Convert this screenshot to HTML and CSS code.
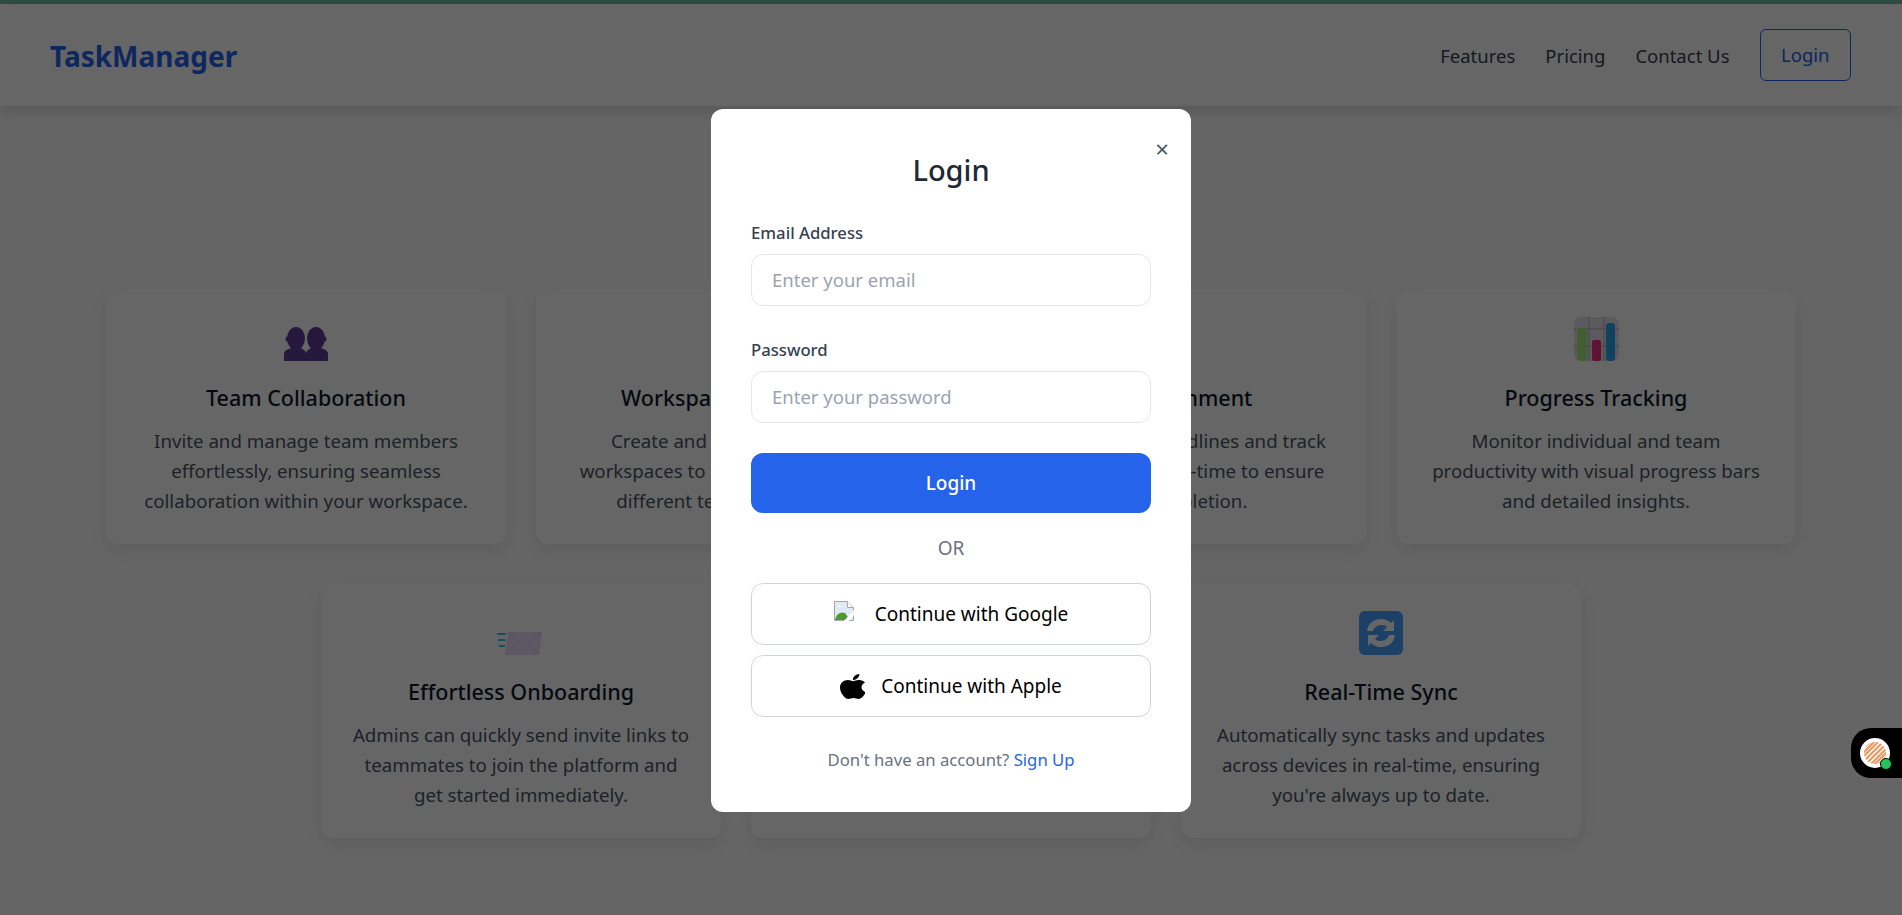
FILE: index.html
```html
<!DOCTYPE html>
<html lang="en">
<head>
<meta charset="UTF-8">
<meta name="viewport" content="width=device-width, initial-scale=1.0">
<title>TaskManager</title>
<link rel="stylesheet" href="styles.css">
</head>
<body>

<div class="top-strip"></div>

<header class="navbar">
    <a class="logo" href="#">TaskManager</a>
    <nav class="nav-links">
        <a href="#">Features</a>
        <a href="#">Pricing</a>
        <a href="#">Contact Us</a>
        <a class="nav-login" href="#">Login</a>
    </nav>
</header>

<section class="features">
    <div class="feature-row">
        <div class="feature-card">
            <div class="feature-icon">
                <svg width="44" height="34" viewBox="0 0 44 34">
                    <g fill="#5f3c98">
                        <ellipse cx="12" cy="11.500" rx="9" ry="11.500"/>
                        <ellipse cx="3" cy="12" rx="1.500" ry="2.500"/>
                        <path d="M0 34v-7c0-3 3-5 8-6h8c4 1 6 3 6 6v7z"/>
                        <ellipse cx="32" cy="11.500" rx="9" ry="11.500"/>
                        <ellipse cx="41" cy="12" rx="1.500" ry="2.500"/>
                        <path d="M22 34v-7c0-3 2-5 6-6h8c5 1 8 3 8 6v7z"/>
                    </g>
                </svg>
            </div>
            <h3>Team Collaboration</h3>
            <p>Invite and manage team members effortlessly, ensuring seamless collaboration within your workspace.</p>
        </div>
        <div class="feature-card">
            <div class="feature-icon"></div>
            <h3>Workspace Separation</h3>
            <p>Create and manage multiple workspaces to organize projects for different teams and clients.</p>
        </div>
        <div class="feature-card">
            <div class="feature-icon"></div>
            <h3>Task Assignment</h3>
            <p>Assign tasks, set deadlines and track their progress in real-time to ensure timely completion.</p>
        </div>
        <div class="feature-card">
            <div class="feature-icon">
                <svg width="45" height="44" viewBox="0 0 45 44">
                    <rect width="45" height="44" rx="7" fill="#e4e0ea"/>
                    <path d="M0 12h45M0 29h45M15 0v44M30 0v44" stroke="#b4b0ba" stroke-width="1"/>
                    <rect x="3" y="11" width="10" height="33" rx="3" fill="#a4f07a"/>
                    <rect x="18" y="23" width="9" height="21" rx="2" fill="#ee2f7c"/>
                    <rect x="32" y="6" width="9" height="38" rx="3" fill="#2aa4ee"/>
                </svg>
            </div>
            <h3>Progress Tracking</h3>
            <p>Monitor individual and team productivity with visual progress bars and detailed insights.</p>
        </div>
    </div>
    <div class="feature-row">
        <div class="feature-card">
            <div class="feature-icon">
                <svg class="mail-icon" width="45" height="23" viewBox="0 0 45 23">
                    <path d="M11 0h34l-3 23H8z" fill="#e8dcf8"/>
                    <path d="M11 0l15 12L45 0M8 23l13-14M42 23L31 9" stroke="#dccdee" stroke-width="1" fill="none"/>
                    <path d="M0 2h9M1 8h7M2 14h6" stroke="#3fc4e0" stroke-width="2"/>
                </svg>
            </div>
            <h3>Effortless Onboarding</h3>
            <p>Admins can quickly send invite links to teammates to join the platform and get started immediately.</p>
        </div>
        <div class="feature-card"></div>
        <div class="feature-card">
            <div class="feature-icon">
                <svg width="44" height="44" viewBox="0 0 44 44">
                    <rect width="44" height="44" rx="6" fill="#4aa0ff"/>
                    <path d="M8 20c1-8 7-12 14-12 4 0 8 2 10 4l3-3v11H24l4-4c-2-2-4-2-6-2-4 0-7 3-8 6z" fill="#fff"/>
                    <path d="M36 24c-1 8-7 12-14 12-4 0-8-2-10-4l-3 3V24h11l-4 4c2 2 4 2 6 2 4 0 7-3 8-6z" fill="#fff"/>
                </svg>
            </div>
            <h3>Real-Time Sync</h3>
            <p>Automatically sync tasks and updates across devices in real-time, ensuring you're always up to date.</p>
        </div>
    </div>
</section>

<div class="overlay">
    <div class="modal">
        <button class="close-btn" type="button">×</button>
        <h2 class="modal-title">Login</h2>
        <div class="form-group">
            <label for="email">Email Address</label>
            <input type="email" id="email" placeholder="Enter your email">
        </div>
        <div class="form-group">
            <label for="password">Password</label>
            <input type="password" id="password" placeholder="Enter your password">
        </div>
        <button class="login-btn" type="button">Login</button>
        <div class="or-text">OR</div>
        <button class="social-btn google-btn" type="button">
            <svg class="broken-img" width="20" height="20" viewBox="0 0 20 20">
                <path d="M.5.5h13l6 6v13H.5z" fill="#dfe9f8" stroke="#a8a8a8"/>
                <path d="M13.500.5v6h6" fill="#fff" stroke="#a8a8a8"/>
                <path d="M1 19c1-6 6-9 10-7l5 7z" fill="#4e9a2e"/>
                <path d="M3 6c1-2 4-2 5 0z" fill="#fff"/>
                <path d="M9 21L20 9v5l-6 7z" fill="#fff"/>
            </svg>
            Continue with Google
        </button>
        <button class="social-btn apple-btn" type="button">
            <svg width="25" height="25" viewBox="4 32 365 449" preserveAspectRatio="none">
                <path d="M318.700 268.700c-.2-36.700 16.400-64.400 50-84.800-18.800-26.900-47.200-41.700-84.700-44.600-35.500-2.800-74.300 20.700-88.500 20.700-15 0-49.400-19.700-76.400-19.700C63.300 141.200 4 184.800 4 273.500q0 39.300 14.400 81.200c12.800 36.700 59 126.700 107.200 125.200 25.200-.6 43-17.900 75.800-17.900 31.800 0 48.300 17.900 76.400 17.900 48.600-.7 90.400-82.500 102.600-119.300-65.200-30.700-61.700-90-61.700-91.900zm-56.600-164.200c27.300-32.400 24.800-61.900 24-72.500-24.100 1.400-52 16.400-67.900 34.900-17.500 19.800-27.800 44.300-25.600 71.900 26.100 2 49.900-11.400 69.500-34.300z"/>
            </svg>
            Continue with Apple
        </button>
        <p class="signup-text">Don't have an account? <a href="#">Sign Up</a></p>
    </div>
</div>

<div class="chat-widget">
    <div class="chat-avatar">
        <svg width="30" height="30" viewBox="0 0 30 30">
            <defs>
                <clipPath id="orb"><circle cx="15" cy="15" r="11"/></clipPath>
            </defs>
            <circle cx="15" cy="15" r="15" fill="#fff"/>
            <g clip-path="url(#orb)" stroke="#f0935a" stroke-width="2">
                <path d="M2 12L12 2M2 16L16 2M2 20L20 2M3 24L24 3M6 26L26 6M10 27L27 10M14 27L27 14M18 27L27 18M22 27L27 22"/>
            </g>
        </svg>
        <span class="chat-dot"></span>
    </div>
</div>

</body>
</html>
```

FILE: styles.css
```css
* {
    box-sizing: border-box;
}
body {
    font-family: "Noto Sans", "Open Sans", sans-serif;
    background-color: #fcfcfd;
    margin: 0;
    height: 915px;
    overflow: hidden;
}
.top-strip {
    height: 4px;
    background-color: #72bfa6;
}
.navbar {
    display: flex;
    justify-content: space-between;
    align-items: center;
    padding: 25px 51px 25px 50px;
    background-color: #fff;
    box-shadow: 0 4px 14px rgba(0, 0, 0, 0.15);
}
.logo {
    font-size: 28px;
    font-weight: 700;
    line-height: 40px;
    padding-top: 2px;
    color: #2563eb;
    text-decoration: none;
}
.nav-links {
    display: flex;
    align-items: center;
    gap: 30px;
}
.nav-links a {
    font-size: 18.500px;
    color: #374151;
    text-decoration: none;
}
.nav-links a.nav-login {
    color: #2563eb;
    border: 1px solid #2563eb;
    border-radius: 6px;
    padding: 12px 20.500px;
    height: 52px;
}
.features {
    padding: 184px 106px 0;
}
.feature-row {
    display: flex;
    justify-content: center;
    gap: 30px;
    margin-bottom: 40px;
}
.feature-card {
    width: 400px;
    height: 254px;
    padding: 25px 30px;
    text-align: center;
    background-color: #fff;
    border-radius: 12px;
    box-shadow: 0 6px 16px rgba(0, 0, 0, 0.08);
}
.feature-icon {
    height: 46px;
    display: flex;
    justify-content: center;
    align-items: flex-end;
}
.mail-icon {
    margin-right: 4px;
}
.feature-card h3 {
    font-size: 21.500px;
    font-weight: 500;
    color: #111827;
    margin: 22px 0 14px;
}
.feature-card p {
    font-size: 18.700px;
    line-height: 30px;
    color: #4b5563;
    margin: 0;
}
.overlay {
    position: fixed;
    inset: 0;
    display: flex;
    justify-content: center;
    align-items: flex-start;
    padding-top: 109px;
    background-color: rgba(0, 0, 0, 0.6);
}
.modal {
    position: relative;
    width: 480px;
    height: 703px;
    padding: 40px;
    background-color: #fff;
    border-radius: 12px;
}
.close-btn {
    position: absolute;
    top: 21px;
    right: 19px;
    width: 20px;
    height: 36px;
    padding: 0;
    border: none;
    background: none;
    font-family: inherit;
    font-size: 24px;
    color: #4b5563;
    cursor: pointer;
}
.modal-title {
    font-size: 29px;
    font-weight: 500;
    line-height: 38px;
    color: #1f2937;
    text-align: center;
    margin: 2px 0 30px;
}
.form-group {
    margin-bottom: 30px;
}
.form-group label {
    display: block;
    font-size: 16.700px;
    font-weight: 500;
    line-height: 25px;
    padding-top: 1px;
    margin-bottom: 9px;
    color: #374151;
}
.form-group input {
    display: block;
    width: 100%;
    height: 52px;
    padding: 0 20px 2px;
    font-family: inherit;
    font-size: 18.500px;
    border: 1px solid #e5e7eb;
    border-radius: 12px;
    outline: none;
}
.form-group input::placeholder {
    color: #9ca3af;
}
.login-btn {
    display: block;
    width: 100%;
    height: 60px;
    font-family: inherit;
    font-size: 19px;
    font-weight: 500;
    color: #fff;
    background-color: #2563eb;
    border: none;
    border-radius: 12px;
    cursor: pointer;
}
.or-text {
    font-size: 19px;
    line-height: 24px;
    color: #6b7280;
    text-align: center;
    margin: 23px 0;
}
.social-btn {
    display: flex;
    justify-content: center;
    align-items: center;
    width: 100%;
    height: 62px;
    font-family: inherit;
    font-size: 19px;
    color: #000;
    background-color: #fff;
    border: 1px solid #d1d5db;
    border-radius: 12px;
    cursor: pointer;
}
.google-btn {
    gap: 21px;
    margin-bottom: 10px;
}
.google-btn .broken-img {
    margin-bottom: 6px;
}
.apple-btn {
    gap: 16px;
}
.signup-text {
    font-size: 16.700px;
    line-height: 25px;
    color: #6b7280;
    text-align: center;
    margin: 30px 0 0;
}
.signup-text a {
    color: #2563eb;
    text-decoration: none;
}
.chat-widget {
    position: fixed;
    right: 0;
    top: 728px;
    display: flex;
    align-items: center;
    width: 51px;
    height: 50px;
    padding-left: 9px;
    background-color: #000;
    border-radius: 20px 0 0 20px;
}
.chat-avatar {
    position: relative;
    width: 30px;
    height: 30px;
}
.chat-avatar svg {
    display: block;
}
.chat-dot {
    position: absolute;
    right: -2px;
    bottom: -2px;
    width: 12px;
    height: 12px;
    background-color: #22c55e;
    border: 1px solid #000;
    border-radius: 50%;
}
```
